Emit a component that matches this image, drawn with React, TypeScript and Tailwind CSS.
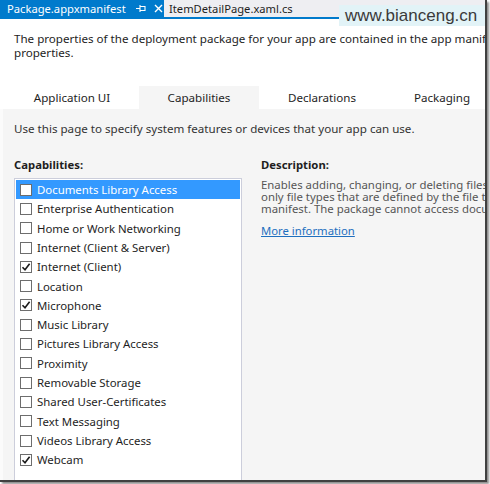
import React from "react";

const items: [string, boolean][] = [
  ["Documents Library Access", false],
  ["Enterprise Authentication", false],
  ["Home or Work Networking", false],
  ["Internet (Client & Server)", false],
  ["Internet (Client)", true],
  ["Location", false],
  ["Microphone", true],
  ["Music Library", false],
  ["Pictures Library Access", false],
  ["Proximity", false],
  ["Removable Storage", false],
  ["Shared User-Certificates", false],
  ["Text Messaging", false],
  ["Videos Library Access", false],
  ["Webcam", true],
];

function Box({ checked }: { checked: boolean }) {
  return (
    <div className="w-[12px] h-[12px] border border-[#6d6d6d] bg-white flex items-center justify-center shrink-0">
      {checked && (
        <svg width="10" height="10" viewBox="0 0 10 10">
          <path d="M1.5 5.2 L4 7.8 L8.6 1.8" fill="none" stroke="#1a1a1a" strokeWidth="1.6" />
        </svg>
      )}
    </div>
  );
}

export default function App() {
  return (
    <div
      className="w-[490px] h-[484px] bg-white overflow-hidden"
      style={{ fontFamily: '"Noto Sans", "Open Sans", sans-serif' }}
    >
      <div className="relative w-[487px] h-[482px] border-r-2 border-b-2 border-[#404040] shadow-[2px_2px_2px_rgba(0,0,0,0.45)] overflow-hidden flex flex-col">
        {/* document tabs */}
        <div className="h-[19px] bg-[#eeeef2] border-b-2 border-[#007acc] flex items-stretch shrink-0">
          <div className="bg-[#007acc] text-white flex items-center pl-[7px] w-[164px] text-[11.2px] leading-none">
            <span>Package.appxmanifest</span>
            <svg className="ml-[10px]" width="10" height="9" viewBox="0 0 10 9">
              <path d="M0 4.5 H4 M4 1 V8 M4 2.5 H9 V6.5 H4" fill="none" stroke="white" strokeWidth="1.1" />
            </svg>
            <svg className="ml-[8px]" width="9" height="9" viewBox="0 0 9 9">
              <path d="M1 1 L8 8 M8 1 L1 8" stroke="white" strokeWidth="1.4" />
            </svg>
          </div>
          <div className="flex items-center pl-[5px] text-[11.2px] leading-none text-[#1e1e1e]">
            ItemDetailPage.xaml.cs
          </div>
        </div>
        <div
          className="absolute left-[339px] top-[5px] w-[146px] h-[21px] bg-[#e2f3f7] text-[#3a3a3a] text-[17px] leading-[21px] pl-[6px]"
          style={{ fontFamily: '"Liberation Sans", Arial, sans-serif' }}
        >
          www.bianceng.cn
        </div>

        {/* intro */}
        <div className="bg-white h-[67px] shrink-0 pl-[14px] pt-[13px] text-[11.6px] leading-[14px] text-[#1e1e1e] whitespace-nowrap">
          <div>The properties of the deployment package for your app are contained in the app manifest file.</div>
          <div>properties.</div>
        </div>

        {/* page tabs */}
        <div className="bg-white h-[23px] shrink-0 flex pl-[5px] text-[11.6px] text-[#1e1e1e]">
          <div className="w-[134px] shrink-0 flex items-center justify-center pt-[1px]">Application UI</div>
          <div className="w-[120px] shrink-0 flex items-center justify-center bg-[#f5f5f5] pt-[1px]">Capabilities</div>
          <div className="w-[126px] shrink-0 flex items-center justify-center pt-[1px]">Declarations</div>
          <div className="w-[114px] shrink-0 flex items-center justify-center pt-[1px]">Packaging</div>
        </div>

        {/* content */}
        <div className="flex-1 bg-[#f5f5f5] border-l-[3px] border-[#fbfbfb] pl-[11px] text-[#1e1e1e]">
          <div className="pt-[12px] text-[11.6px] leading-[16px] text-[#333] whitespace-nowrap">
            Use this page to specify system features or devices that your app can use.
          </div>
          <div className="flex mt-[18px]">
            <div className="w-[228px] shrink-0">
              <div className="text-[11.3px] font-bold leading-[16px] mb-[5px] pt-[2px]">Capabilities:</div>
              <div className="border border-[#cccedb] bg-white p-[1px] h-[320px]">
                {items.map(([label, checked], i) => (
                  <div
                    key={label}
                    className={
                      "h-[19.3px] flex items-center gap-[5px] pl-[4px] text-[11.4px] " +
                      (i === 0 ? "bg-[#3399ff] text-white" : "text-[#1e1e1e]")
                    }
                  >
                    <Box checked={checked} />
                    <span className="whitespace-nowrap">{label}</span>
                  </div>
                ))}
              </div>
            </div>
            <div className="ml-[19px] whitespace-nowrap pt-[2px]">
              <div className="text-[11.3px] font-bold leading-[16px]">Description:</div>
              <div className="mt-[6px] text-[11.4px] leading-[12px] text-[#555]">
                <div>Enables adding, changing, or deleting files in the library.</div>
                <div>only file types that are defined by the file type associations</div>
                <div>manifest. The package cannot access documents.</div>
              </div>
              <div className="mt-[9px] text-[11.3px] leading-[14px] text-[#1e6fbf] underline">More information</div>
            </div>
          </div>
        </div>
      </div>
    </div>
  );
}
